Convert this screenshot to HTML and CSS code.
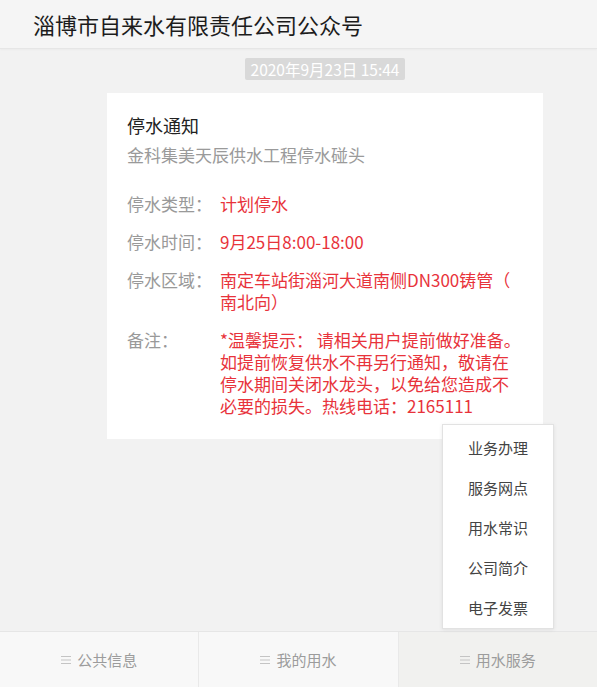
FILE: index.html
```html
<!DOCTYPE html>
<html lang="zh-CN">
<head>
    <meta charset="UTF-8">
    <meta name="viewport" content="width=device-width, initial-scale=1.0">
    <title>淄博市自来水有限责任公司公众号</title>
    <link rel="stylesheet" href="styles.css">
</head>
<body>
    <div class="page">
        <header class="top-bar">
            <h1>淄博市自来水有限责任公司公众号</h1>
        </header>

        <main class="chat">
            <div class="message-column">
                <div class="time-stamp">2020年9月23日 15:44</div>

                <div class="notice-card">
                    <h2 class="notice-title">停水通知</h2>
                    <p class="notice-sub">金科集美天辰供水工程停水碰头</p>

                    <div class="notice-row">
                        <span class="row-label">停水类型：</span>
                        <span class="row-value">计划停水</span>
                    </div>
                    <div class="notice-row">
                        <span class="row-label">停水时间：</span>
                        <span class="row-value">9月25日8:00-18:00</span>
                    </div>
                    <div class="notice-row">
                        <span class="row-label">停水区域：</span>
                        <span class="row-value">南定车站街淄河大道南侧DN300铸管（南北向）</span>
                    </div>
                    <div class="notice-row">
                        <span class="row-label">备注：</span>
                        <span class="row-value">*温馨提示： 请相关用户提前做好准备。如提前恢复供水不再另行通知，敬请在停水期间关闭水龙头，以免给您造成不必要的损失。热线电话：2165111</span>
                    </div>
                </div>
            </div>
        </main>

        <nav class="tab-bar">
            <a class="tab">
                <svg class="tab-icon" width="10" height="8" viewBox="0 0 10 8"><path d="M0 0.5H10M0 4H10M0 7.5H10" stroke="#c4c4c4" stroke-width="1"/></svg>
                公共信息
            </a>
            <a class="tab">
                <svg class="tab-icon" width="10" height="8" viewBox="0 0 10 8"><path d="M0 0.5H10M0 4H10M0 7.5H10" stroke="#c4c4c4" stroke-width="1"/></svg>
                我的用水
            </a>
            <a class="tab tab-active">
                <svg class="tab-icon" width="10" height="8" viewBox="0 0 10 8"><path d="M0 0.5H10M0 4H10M0 7.5H10" stroke="#c4c4c4" stroke-width="1"/></svg>
                用水服务
            </a>

            <!-- submenu for 用水服务 -->
            <ul class="sub-menu">
                <li>业务办理</li>
                <li>服务网点</li>
                <li>用水常识</li>
                <li>公司简介</li>
                <li>电子发票</li>
            </ul>
        </nav>
    </div>
</body>
</html>
```

FILE: styles.css
```css
body {
    margin: 0;
    padding: 0;
    font-family: "Noto Sans CJK SC", "Noto Sans", sans-serif;
    background-color: #f2f2f2;
}

.page {
    display: flex;
    flex-direction: column;
    height: 100vh;
    overflow: hidden;
}

.top-bar {
    height: 48px;
    background-color: #f5f5f5;
    border-bottom: 1px solid #e6e6e6;
    box-shadow: 0 1px 2px rgba(0, 0, 0, 0.03);
    display: flex;
    align-items: center;
    padding-left: 33px;
}

.top-bar h1 {
    margin: 0;
    font-size: 22px;
    font-weight: normal;
    color: #1c1c1c;
    line-height: 1;
}

.chat {
    flex: 1;
}

.message-column {
    margin: 0 54px 0 107px;
    display: flex;
    flex-direction: column;
    align-items: center;
}

.time-stamp {
    margin-top: 9px;
    height: 22px;
    line-height: 22px;
    padding: 0 6px;
    background-color: #d9d9d9;
    color: #fff;
    font-size: 15.5px;
    border-radius: 2px;
}

.notice-card {
    align-self: stretch;
    margin-top: 13px;
    background: #fff;
    padding: 20px 19px 22px 20px;
}

.notice-title {
    margin: 0 0 7px;
    font-size: 18px;
    font-weight: normal;
    line-height: 24px;
    color: #222;
}

.notice-sub {
    margin: 0 0 27px;
    font-size: 17px;
    line-height: 22px;
    color: #9a9a9a;
}

.notice-row {
    display: flex;
    font-size: 17px;
    line-height: 22px;
    margin-bottom: 16px;
}

.notice-row:last-child {
    margin-bottom: 0;
}

.row-label {
    width: 93px;
    flex-shrink: 0;
    color: #999;
}

.row-value {
    width: 304px;
    color: #e8333b;
    line-break: anywhere;
}

.tab-bar {
    position: relative;
    height: 55px;
    display: flex;
    background-color: #f8f8f8;
    border-top: 1px solid #e6e6e6;
}

.tab {
    flex: 1;
    display: flex;
    align-items: center;
    justify-content: center;
    gap: 6px;
    font-size: 15px;
    color: #9c9c9c;
    border-left: 1px solid #e9e9e9;
}

.tab:first-child {
    border-left: none;
}

.tab-active {
    background-color: #f1f1ef;
}

.sub-menu {
    position: absolute;
    right: 43px;
    bottom: 58px;
    width: 110px;
    margin: 0;
    padding: 3px 0 0;
    list-style: none;
    background: #fff;
    border: 1px solid #e2e2e2;
    box-shadow: 0 1px 4px rgba(0, 0, 0, 0.08);
}

.sub-menu li {
    height: 40px;
    line-height: 40px;
    text-align: center;
    font-size: 15px;
    color: #444;
}
```
